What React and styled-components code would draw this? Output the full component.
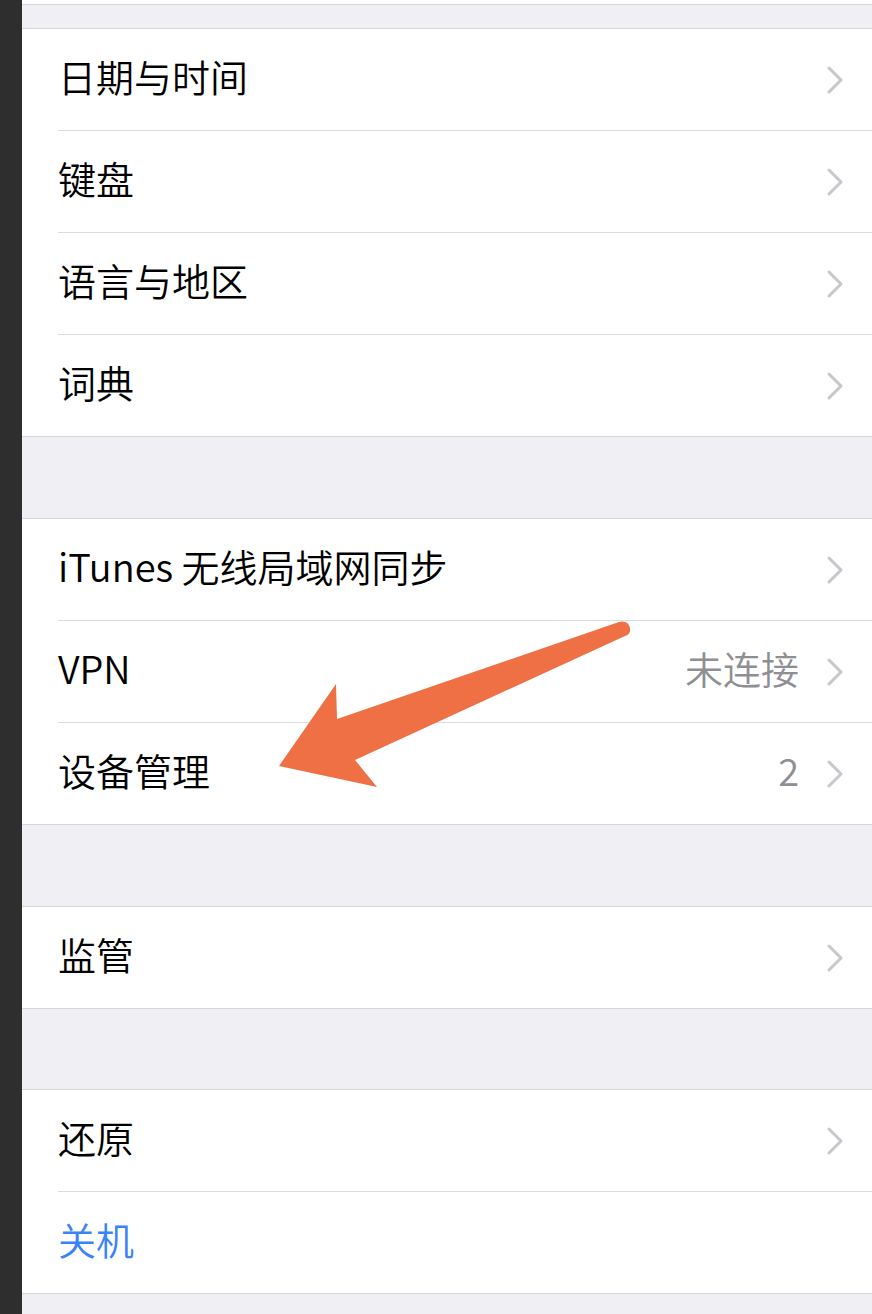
import React from 'react';
import styled, { createGlobalStyle } from 'styled-components';

const GlobalStyle = createGlobalStyle`
  html, body {
    margin: 0;
    padding: 0;
    background: #efeff4;
  }
  body {
    font-family: "Noto Sans CJK SC", "Noto Sans", sans-serif;
  }
`;

const Screen = styled.div`
  display: flex;
  width: 872px;
  height: 1314px;
  overflow: hidden;
  position: relative;
`;

const Edge = styled.div`
  width: 22px;
  flex-shrink: 0;
  background: #2e2e2e;
`;

const Settings = styled.div`
  flex: 1;
  display: flex;
  flex-direction: column;
  background: #efeff4;
`;

const TopStub = styled.div`
  height: 4px;
  background: #fff;
  border-bottom: 1px solid #d6d6da;
`;

const Gap = styled.div`
  height: ${(p) => p.$h}px;
  flex-shrink: 0;
`;

const Group = styled.div`
  background: #fff;
  border-top: 1px solid #d6d6da;
  border-bottom: 1px solid #d6d6da;
`;

const Row = styled.div`
  height: 101px;
  display: flex;
  align-items: center;
  margin-left: 36px;
  padding-right: 28px;
  border-top: ${(p) => (p.$first ? 'none' : '1px solid #dcdce0')};
`;

const Label = styled.div`
  flex: 1;
  font-size: 38px;
  font-weight: 350;
  margin-bottom: 8px;
  color: ${(p) => (p.$blue ? '#3a82f7' : '#000')};
  white-space: nowrap;
`;

const Value = styled.div`
  font-size: 38px;
  font-weight: 350;
  margin-bottom: 8px;
  color: #8e8e93;
  margin-right: 27px;
`;

const Arrow = styled.svg`
  position: absolute;
  left: 0;
  top: 0;
  pointer-events: none;
`;

function Chevron() {
  return (
    <svg width="18" height="30" viewBox="0 0 18 30">
      <path d="M3 3 L15 15 L3 27" fill="none" stroke="#c7c7cc" strokeWidth="3" strokeLinecap="round" strokeLinejoin="round" />
    </svg>
  );
}

function Item({ label, value, first, blue, noChevron }) {
  return (
    <Row $first={first}>
      <Label $blue={blue}>{label}</Label>
      {value && <Value>{value}</Value>}
      {!noChevron && <Chevron />}
    </Row>
  );
}

export default function App() {
  return (
    <>
      <GlobalStyle />
      <Screen>
        <Edge />
        <Settings>
          <TopStub />
          <Gap $h={23} />
          <Group>
            <Item first label="日期与时间" />
            <Item label="键盘" />
            <Item label="语言与地区" />
            <Item label="词典" />
          </Group>
          <Gap $h={81} />
          <Group>
            <Item first label="iTunes 无线局域网同步" />
            <Item label="VPN" value="未连接" />
            <Item label="设备管理" value="2" />
          </Group>
          <Gap $h={81} />
          <Group>
            <Item first label="监管" />
          </Group>
          <Gap $h={80} />
          <Group>
            <Item first label="还原" />
            <Item label="关机" blue noChevron />
          </Group>
        </Settings>
        <Arrow width="872" height="1314" viewBox="0 0 872 1314">
          <path
            d="M279 766 L336 684 L337 719 L619 622 Q628 620 630 628 Q631 634 625 636 L355 760 L377 787 Z"
            fill="#ee7044"
          />
        </Arrow>
      </Screen>
    </>
  );
}
